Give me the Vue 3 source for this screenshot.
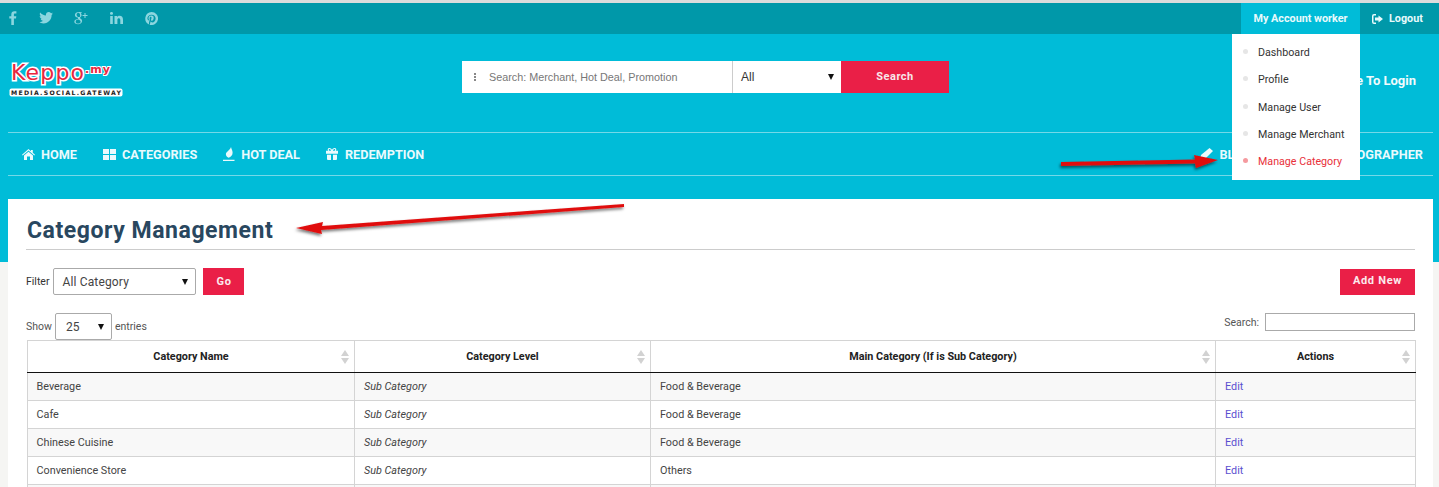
<script setup>
const categories = [
  { name: 'Beverage', level: 'Sub Category', parent: 'Food & Beverage' },
  { name: 'Cafe', level: 'Sub Category', parent: 'Food & Beverage' },
  { name: 'Chinese Cuisine', level: 'Sub Category', parent: 'Food & Beverage' },
  { name: 'Convenience Store', level: 'Sub Category', parent: 'Others' },
  { name: 'Dessert', level: 'Sub Category', parent: 'Food & Beverage' }
]
const columns = ['Category Name', 'Category Level', 'Main Category (If is Sub Category)', 'Actions']
const menu = ['Dashboard', 'Profile', 'Manage User', 'Manage Merchant', 'Manage Category']
</script>

<template>
  <div class="page">
    <div class="topbar">
      <div class="social">
        <svg width="8" height="14" viewBox="0 0 8 14"><path d="M2.3 14V7.6H.3V5.2h2V3.500C2.300 1.300 3.500.2 5.400.2c.9 0 1.700.1 2 .1v2.200H6.100c-1 0-1.200.5-1.200 1.200v1.500h2.400l-.3 2.400H4.900V14z"/></svg>
        <svg width="14" height="12" viewBox="0 0 14 12"><path d="M14 1.500c-.5.2-1 .4-1.600.4.600-.3 1-.9 1.200-1.500-.5.3-1.100.6-1.800.7C11.300.5 10.600.1 9.700.1 8.200.1 6.900 1.400 6.900 2.900c0 .2 0 .4.100.6C4.600 3.400 2.600 2.300 1.200.6.900 1 .800 1.500.8 2c0 1 .5 1.800 1.200 2.300-.5 0-.9-.1-1.300-.3 0 1.400 1 2.500 2.300 2.800-.5.100-.8.100-1.300.1.400 1.100 1.400 1.900 2.600 1.900C3 9.700 1.200 10.300 0 10.100 1.300 11 2.800 11.500 4.400 11.500c5.300 0 8.200-4.400 8.200-8.200v-.4c.6-.4 1-.9 1.400-1.400z"/></svg>
        <svg width="14" height="14" viewBox="0 0 14 14"><path d="M5 1h3.200L7.300 1.700H6.400C7.200 2.300 7.600 3.100 7.600 4c0 1-.5 1.700-1.200 2.300-.5.400-.6.800 0 1.200 1 .7 1.700 1.400 1.700 2.500 0 1.800-1.700 3.200-4 3.200C1.800 13.200.3 12.300.3 10.800c0-1.600 1.800-2.700 3.900-2.700-.5-.6-.6-1.100-.3-1.700C2.200 6.500.9 5.400.9 3.900.9 2.300 2.700 1 5 1zm-.5.700C3.200 1.700 2.400 2.700 2.600 4c.2 1.200 1.100 2.100 2.300 2.100S6.300 5.100 6.100 3.900 5.400 1.700 4.500 1.700zM4.400 8.600c-1.500 0-2.700.9-2.700 2.100s1.100 1.900 2.500 1.900c1.500 0 2.400-.9 2.400-1.900C6.600 9.800 5.900 9.200 4.400 8.600z"/><path d="M10.500 2h1v2h2v1h-2v2h-1V5h-2V4h2z"/></svg>
        <svg width="13" height="12" viewBox="0 0 13 12"><path d="M.2 4h2.600v8H.2zM1.500 0c.9 0 1.500.6 1.500 1.400s-.6 1.400-1.500 1.400S0 2.200 0 1.400.6 0 1.500 0zM4.500 4H7v1.100C7.400 4.400 8.300 3.800 9.500 3.800c2.400 0 3.500 1.500 3.500 4V12h-2.700V8.100c0-1.100-.4-1.900-1.400-1.900-.8 0-1.200.5-1.400 1-.1.200-.1.500-.1.700V12H4.500z"/></svg>
        <svg width="13" height="13" viewBox="0 0 13 13"><path fill-rule="evenodd" d="M6.500 0a6.500 6.500 0 1 1-1.900 12.700c.2-.4.500-1 .6-1.600l.4-1.500c.3.400.9.800 1.600.8 2 0 3.400-1.800 3.400-4 0-2-1.700-3.600-4-3.600-2.800 0-4.200 1.900-4.200 3.500 0 1 .4 1.800 1.200 2.100.1.100.2 0 .3-.1l.1-.5c0-.2 0-.2-.1-.4-.2-.3-.4-.6-.4-1.100 0-1.400 1-2.700 2.800-2.700 1.500 0 2.400.9 2.400 2.200 0 1.600-.7 3-1.800 3-.6 0-1-.5-.9-1.100.2-.7.5-1.500.5-2 0-.5-.3-.9-.8-.9-.6 0-1.100.6-1.100 1.500 0 .5.200.9.200.9l-.7 3c-.2.800-.1 1.600 0 2.200A6.500 6.500 0 0 1 6.500 0z"/></svg>
      </div>
      <div class="account">
        <span class="account-tab">My Account worker</span>
        <span class="logout">
          <svg width="11" height="10" viewBox="0 0 11 10"><path d="M4 0v1.500H2A.5.500 0 0 0 1.500 2v6a.5.500 0 0 0 .5.500h2V10H2a2 2 0 0 1-2-2V2a2 2 0 0 1 2-2zM6.500 1.500 11 5 6.500 8.500V6.500H3v-3h3.500z"/></svg>
          Logout
        </span>
        <ul class="dropdown">
          <li v-for="(item, i) in menu" :key="item" :class="{ active: i === menu.length - 1 }">{{ item }}</li>
        </ul>
      </div>
    </div>

    <header class="brand-row">
      <svg class="logo" width="118" height="38" viewBox="0 0 118 38">
        <text class="logo-main" x="3" y="19">Keppo</text>
        <text class="logo-tld" x="77" y="12">.my</text>
        <rect x="1.500" y="27.500" width="113" height="8" rx="2" fill="#fff"/>
        <text class="logo-sub" x="3" y="34" textLength="110">MEDIA.SOCIAL.GATEWAY</text>
      </svg>
      <div class="search-box">
        <span class="dots"></span>
        <span class="search-input">Search: Merchant, Hot Deal, Promotion</span>
        <span class="search-select">All<i class="caret"></i></span>
        <span class="search-btn">Search</span>
      </div>
      <span class="login-link">Welcome To Login</span>
    </header>

    <nav class="mainnav">
      <div class="nav-left">
        <span class="nav-item">
          <svg width="13" height="11" viewBox="0 0 13 11"><path d="M6.500 0 9 2.200V1h1.800v2.800L13 5.800l-.7.700-5.800-5-5.800 5-.7-.7zM2 6.600l4.500-3.900L11 6.600V11H8V7.500H5V11H2z"/></svg>
          HOME
        </span>
        <span class="nav-item">
          <svg width="13" height="11" viewBox="0 0 13 11"><path d="M0 0h6v5H0zM7 0h6v5H7zM0 6h6v5H0zM7 6h6v5H7z"/></svg>
          CATEGORIES
        </span>
        <span class="nav-item">
          <svg width="12" height="14" viewBox="0 0 12 14"><path d="M8 0c.6 2.600 1.600 3.800 1.600 5.700 0 2.300-1.500 4.300-4.100 5.100C3.800 10 2.900 8.800 2.900 7.300 2.900 4.500 7 3.500 8 0zM0 12.800h11.500V14H0z"/></svg>
          HOT DEAL
        </span>
        <span class="nav-item">
          <svg width="12" height="12" viewBox="0 0 12 12"><path fill-rule="evenodd" d="M3.500 0C4.600 0 5.400.7 6 1.800 6.600.7 7.400 0 8.500 0 9.600 0 10.300.7 10.300 1.600c0 .5-.2.900-.5 1.200H12v3H0v-3h2.200c-.3-.3-.5-.7-.5-1.200C1.700.7 2.400 0 3.500 0zm0 1.100c-.4 0-.7.200-.7.600 0 .5.400 1.100 1 1.100h1.300c-.4-1-1-1.700-1.600-1.700zm5 0c-.6 0-1.200.7-1.600 1.700h1.300c.6 0 1-.6 1-1.100 0-.4-.3-.6-.7-.6zM1 6.800h4V12H2a1 1 0 0 1-1-1zM7 6.800h4V11a1 1 0 0 1-1 1H7z"/></svg>
          REDEMPTION
        </span>
      </div>
      <div class="nav-right">
        <span class="nav-item">
          <svg width="13" height="12" viewBox="0 0 13 12"><path d="M9.500 0 13 3 5 11 0 12l1-5z"/></svg>
          BLOG
        </span>
        <span class="nav-item">PHOTOGRAPHER</span>
      </div>
    </nav>

    <main class="card">
      <h1 class="title">Category Management</h1>
      <div class="toolbar">
        <div class="filter">
          <label>Filter</label>
          <span class="select filter-select">All Category<i class="caret"></i></span>
          <span class="btn go">Go</span>
        </div>
        <span class="btn add">Add New</span>
      </div>
      <div class="table-tools">
        <div class="entries">
          Show
          <span class="select length-select">25<i class="caret"></i></span>
          entries
        </div>
        <div class="table-search">Search:<span class="table-search-input"></span></div>
      </div>
      <table class="data">
        <colgroup>
          <col class="c1"><col class="c2"><col class="c3"><col class="c4">
        </colgroup>
        <thead>
          <tr>
            <th v-for="col in columns" :key="col">
              {{ col }}
              <svg class="sort" width="8" height="14" viewBox="0 0 8 14"><path d="M4 0 8 6H0zM0 8h8l-4 6z"/></svg>
            </th>
          </tr>
        </thead>
        <tbody>
          <tr v-for="row in categories" :key="row.name">
            <td>{{ row.name }}</td>
            <td class="level">{{ row.level }}</td>
            <td>{{ row.parent }}</td>
            <td><a class="edit">Edit</a></td>
          </tr>
        </tbody>
      </table>
    </main>

    <svg class="annotations" width="1439" height="487" viewBox="0 0 1439 487">
      <defs>
        <filter id="shade" x="-10%" y="-100%" width="120%" height="300%">
          <feDropShadow dx="-1" dy="2" stdDeviation="1.500" flood-color="#000" flood-opacity=".55"/>
        </filter>
      </defs>
      <g fill="#e01010" filter="url(#shade)">
        <polygon points="1061,162 1195,159.500 1194,155 1218,160 1196,168 1195,163.500 1061,166"/>
        <polygon points="624,204 624,207 321,230 322,234 296,228 323,222 322,226"/>
      </g>
    </svg>
  </div>
</template>

<style scoped>
.page {
  position: relative;
  width: 1439px;
  height: 487px;
  overflow: hidden;
  border-top: 3px solid #dcdcdc;
  box-sizing: border-box;
  background: linear-gradient(#00bcd8 259px, #f5f5f3 259px);
  font-family: Roboto, "Liberation Sans", sans-serif;
  color: #333;
}
.topbar {
  display: flex;
  justify-content: space-between;
  height: 31px;
  background: #0098a9;
}
.social {
  display: flex;
  align-items: center;
  gap: 21.700px;
  padding: 0 0 1px 9px;
  fill: #8bd6df;
}
.account {
  position: relative;
  display: flex;
  align-items: stretch;
  font-size: 10.800px;
  font-weight: 700;
  color: #e8fafc;
}
.account-tab {
  display: flex;
  align-items: center;
  width: 119px;
  justify-content: center;
  background: #00bcd8;
}
.logout {
  display: flex;
  align-items: center;
  gap: 6px;
  width: 79px;
  padding-left: 12px;
  box-sizing: border-box;
}
.logout svg { fill: #e8fafc; }
.dropdown {
  position: absolute;
  z-index: 2;
  top: 31px;
  left: -9px;
  width: 128px;
  height: 146px;
  margin: 0;
  padding: 5px 0 0;
  box-sizing: border-box;
  list-style: none;
  background: #fff;
  font-size: 10.700px;
  font-weight: 400;
  color: #333;
}
.dropdown li {
  position: relative;
  height: 27.300px;
  line-height: 27px;
  padding-left: 26px;
}
.dropdown li::before {
  content: "";
  position: absolute;
  left: 11px;
  top: 10px;
  width: 5px;
  height: 5px;
  border-radius: 50%;
  background: #e6e6e6;
}
.dropdown li.active { color: #e8303a; }
.dropdown li.active::before { background: #f59a9f; }

.brand-row {
  display: flex;
  align-items: center;
  height: 98px;
  padding-left: 8px;
}
.logo { flex: none; margin-top: -6px; }
.logo-main {
  font: 400 22px "DejaVu Sans", sans-serif;
  letter-spacing: 1.200px;
  fill: #e8273f;
  stroke: #fff;
  stroke-width: 3px;
  paint-order: stroke;
}
.logo-tld {
  font: 700 11px "DejaVu Sans", sans-serif;
  letter-spacing: 1px;
  fill: #e8273f;
  stroke: #fff;
  stroke-width: 2px;
  paint-order: stroke;
}
.logo-sub {
  font: 700 6.200px "DejaVu Sans", sans-serif;
  fill: #222;
}
.search-box {
  display: flex;
  align-items: stretch;
  height: 32px;
  margin: -13px 0 0 336px;
  background: #fff;
  font-size: 11px;
}
.dots {
  width: 2px;
  height: 8px;
  margin: 12px 13px 0 12px;
  background: repeating-linear-gradient(#888 0 2px, transparent 2px 3px);
}
.search-input {
  display: flex;
  align-items: center;
  width: 243px;
  color: #777;
  font-size: 10.800px;
  font-family: "Liberation Sans", sans-serif;
}
.search-select {
  display: flex;
  align-items: center;
  justify-content: space-between;
  width: 109px;
  padding: 0 7px 0 8px;
  box-sizing: border-box;
  border-left: 1px solid #ccc;
  font: 12px "Liberation Sans", sans-serif;
}
.search-btn {
  display: flex;
  align-items: center;
  justify-content: center;
  width: 108px;
  background: #ea1f47;
  color: #f8e7ea;
  font-size: 11px;
  font-weight: 700;
  letter-spacing: .5px;
  padding-bottom: 1px;
  box-sizing: border-box;
}
.caret {
  width: 0;
  height: 0;
  border-left: 3.500px solid transparent;
  border-right: 3.500px solid transparent;
  border-top: 6px solid #111;
}
.login-link {
  margin: -6px 23px 0 auto;
  font-size: 13px;
  font-weight: 700;
  color: #f2fbfd;
}
.mainnav {
  display: flex;
  justify-content: space-between;
  height: 44px;
  margin: 0 6px 0 8px;
  padding: 0 10px 0 14px;
  border-top: 1px solid #74d8e8;
  border-bottom: 1px solid #74d8e8;
  box-sizing: border-box;
}
.nav-left, .nav-right {
  display: flex;
  align-items: center;
  gap: 26px;
}
.nav-left .nav-item:last-child { gap: 7px; }
.nav-right { gap: 72px; }
.nav-item {
  display: flex;
  align-items: center;
  gap: 6px;
  font-size: 12.700px;
  font-weight: 700;
  color: #eafafd;
}
.nav-item svg { fill: #eafafd; }

.card {
  margin: 23px 6px 0 8px;
  padding: 16px 18px 0;
  background: #fff;
  height: 400px;
}
.title {
  margin: 0;
  padding: 0 0 2px 1px;
  border-bottom: 1px solid #ccc;
  font-size: 23px;
  line-height: 32px;
  font-weight: 700;
  letter-spacing: .55px;
  color: #29475f;
}
.toolbar {
  display: flex;
  justify-content: space-between;
  align-items: center;
  margin-top: 18px;
  height: 27px;
}
.filter {
  display: flex;
  align-items: center;
  font-size: 10.500px;
}
.select {
  display: flex;
  align-items: center;
  justify-content: space-between;
  box-sizing: border-box;
  background: #fff;
  border: 1px solid #aaa;
  border-radius: 2px;
  font-size: 12px;
  letter-spacing: .15px;
  color: #444;
}
.filter-select {
  width: 143px;
  height: 27px;
  margin: 0 7px 0 4px;
  padding: 0 7px 0 8px;
}
.length-select {
  width: 57px;
  height: 27px;
  margin: 0 3px 0 3px;
  padding: 0 7px 0 10px;
}
.btn {
  display: flex;
  align-items: center;
  justify-content: center;
  height: 27px;
  background: #ea1f47;
  color: #fbeaed;
  font-size: 11px;
  font-weight: 700;
  letter-spacing: .55px;
}
.go { width: 41px; }
.add {
  width: 75px;
  height: 26px;
  padding-bottom: 2px;
  box-sizing: border-box;
  letter-spacing: .7px;
}
.table-tools {
  display: flex;
  justify-content: space-between;
  align-items: flex-end;
  height: 27px;
  margin-top: 18px;
  font-size: 10.500px;
  color: #555;
}
.entries { display: flex; align-items: center; }
.table-search {
  display: flex;
  align-items: center;
  gap: 6px;
  margin-bottom: 9px;
}
.table-search-input {
  width: 150px;
  height: 18px;
  box-sizing: border-box;
  border: 1px solid #aaa;
}
.data {
  width: 1388px;
  margin-left: 1px;
  border-collapse: collapse;
  table-layout: fixed;
  font-size: 10.800px;
  color: #444;
}
.c1 { width: 327px; }
.c2 { width: 296px; }
.c3 { width: 565px; }
.c4 { width: 200px; }
.data th {
  position: relative;
  height: 32px;
  padding: 0;
  box-sizing: border-box;
  border: 1px solid #d4d4d4;
  border-bottom: 1.500px solid #111;
  font-weight: 700;
  color: #222;
  text-align: center;
}
.sort {
  position: absolute;
  right: 5px;
  top: 9px;
  fill: #d2d2d2;
}
.data td {
  height: 28px;
  padding: 0 9px;
  box-sizing: border-box;
  border: 1px solid #d4d4d4;
}
.data td:first-child { padding-left: 8.500px; }
.data tbody tr:nth-child(odd) td { background: #f8f8f8; }
.level { font-style: italic; }
.edit { color: #5a50d0; }
.annotations {
  position: absolute;
  z-index: 3;
  top: -3px;
  left: 0;
  pointer-events: none;
}
</style>

<style>
html, body { margin: 0; overflow: hidden; }
</style>
